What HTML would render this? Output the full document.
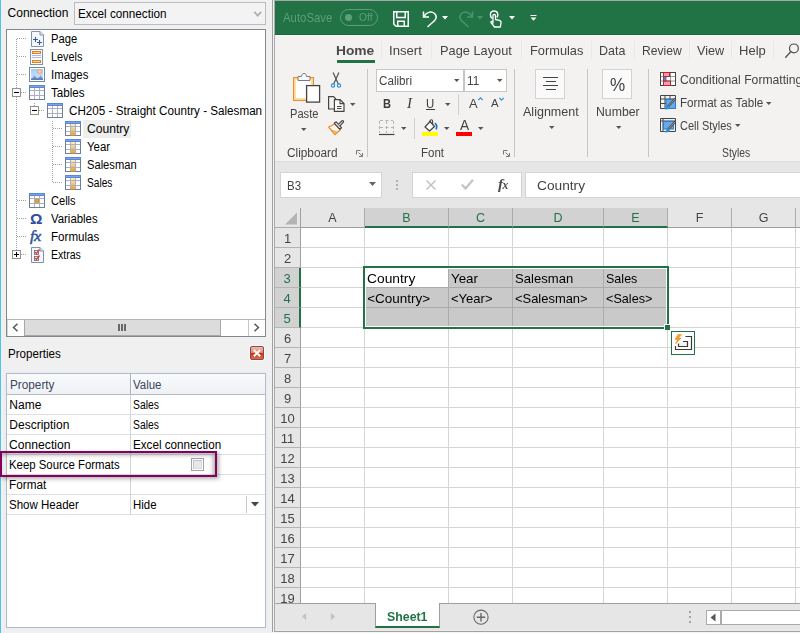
<!DOCTYPE html>
<html><head><meta charset="utf-8"><title>Properties</title>
<style>
*{box-sizing:border-box;margin:0;padding:0}
html,body{width:800px;height:633px;overflow:hidden;background:#f0f0f0}
body{font-family:"Liberation Sans",sans-serif;font-size:12px;color:#000;position:relative}
.a{position:absolute}
.t{position:absolute;white-space:pre;line-height:1}
svg{position:absolute;overflow:visible}
#left{left:0;top:0;width:272px;height:633px;background:#f0f0f0}
#tree{left:6px;top:29px;width:260px;height:308px;background:#fff;border:1px solid #828790}
.tr{position:absolute;white-space:pre;font-size:12px;line-height:18px;height:18px;letter-spacing:-0.1px;color:#000}
.dotv{position:absolute;width:1px;background-image:linear-gradient(#a0a0a0 50%,transparent 50%);background-size:1px 2px}
.doth{position:absolute;height:1px;background-image:linear-gradient(90deg,#a0a0a0 50%,transparent 50%);background-size:2px 1px}
.exp{position:absolute;width:9px;height:9px;border:1px solid #919191;background:#fff}
.exp i{position:absolute;left:1px;top:3px;width:5px;height:1px;background:#000}
.exp b{position:absolute;left:3px;top:1px;width:1px;height:5px;background:#000}
#pg{left:6px;top:373px;width:260px;height:255px;background:#fff;border:1px solid #b4bbc4;box-shadow:0 0 0 2px #eaeef3}
.pr{position:absolute;left:7px;width:258px;height:20px;border-bottom:1px solid #d9dde3}
.pl{position:absolute;font-size:12px;line-height:14px;white-space:pre;letter-spacing:-0.1px}
#xl{left:275px;top:0;width:525px;height:633px;background:#e6e6e6}
.rt{position:absolute;white-space:pre;font-size:13.5px;line-height:16px;color:#444}
.tab{position:absolute;white-space:pre;font-size:14px;line-height:16px;color:#444;top:42px}
.ch{position:absolute;top:208px;height:20px;background:#e6e6e6;border-right:1px solid #ababab;border-bottom:1px solid #9e9e9e;font-size:12.5px;line-height:21.5px;text-align:center;color:#444}
.ch.s{background:#d2d2d2;border-bottom:2px solid #217346;color:#217346}
.rh{position:absolute;left:275px;width:26px;height:20px;background:#e6e6e6;border-bottom:1px solid #b4b4b4;border-right:1px solid #a0a0a0;font-size:13px;line-height:21px;text-align:center;color:#444}
.rh.s{background:#d2d2d2;border-right:2px solid #217346;color:#217346}
.cell{position:absolute;font-size:14px;line-height:20px;white-space:pre;color:#000;letter-spacing:-0.2px}
.gv{position:absolute;width:1px;background:#d4d4d4;top:228px;height:375px}
.gh{position:absolute;height:1px;background:#d4d4d4;left:301px;width:499px}
</style></head><body>
<div class="a" id="left"></div>
<div class="a" style="left:0;top:0;width:1px;height:633px;background:#4dc3ea"></div>
<div class="t" style="left:7.6px;top:7px;font-size:12px;color:#000">Connection</div>
<div class="a" style="left:74px;top:2px;width:192px;height:23px;background:#f3f3f3;border:1px solid #b9bdc2"></div>
<div class="t" style="left:77.8px;top:8px;font-size:12px;transform:scaleX(0.9765);transform-origin:0 0;color:#000">Excel connection</div>
<svg style="left:254px;top:11px" width="8" height="6"><path d="M0.300 0.800L3.700 4.700L7.100 0.800" fill="none" stroke="#b0b0b0" stroke-width="1.800"/></svg>
<div class="a" id="tree"></div>
<svg width="0" height="0" style="left:0;top:0"><defs><linearGradient id="og" x1="0" y1="0" x2="0" y2="1"><stop offset="0" stop-color="#fdf0c0"/><stop offset="1" stop-color="#f0a020"/></linearGradient></defs></svg>
<div class="dotv" style="left:16px;top:39px;height:212px"></div>
<div class="doth" style="left:17px;top:38px;width:10px"></div>
<div class="doth" style="left:17px;top:56px;width:10px"></div>
<div class="doth" style="left:17px;top:74px;width:10px"></div>
<div class="doth" style="left:17px;top:92px;width:10px"></div>
<div class="doth" style="left:17px;top:200px;width:10px"></div>
<div class="doth" style="left:17px;top:218px;width:10px"></div>
<div class="doth" style="left:17px;top:236px;width:10px"></div>
<div class="doth" style="left:17px;top:254px;width:10px"></div>
<div class="doth" style="left:39px;top:110px;width:6px"></div>
<div class="dotv" style="left:34px;top:103px;height:3px"></div>
<div class="dotv" style="left:52px;top:121px;height:61px"></div>
<div class="doth" style="left:53px;top:128px;width:10px"></div>
<div class="doth" style="left:53px;top:146px;width:10px"></div>
<div class="doth" style="left:53px;top:164px;width:10px"></div>
<div class="doth" style="left:53px;top:182px;width:10px"></div>
<div class="exp" style="left:12px;top:88px"><i></i></div>
<div class="exp" style="left:30px;top:106px"><i></i></div>
<div class="exp" style="left:12px;top:250px"><i></i><b></b></div>
<div class="a" style="left:83px;top:120px;width:48px;height:18px;background:#eeeeee"></div>
<div class="t" style="left:51.2px;top:33px;font-size:12px;transform:scaleX(0.9311);transform-origin:0 0;color:#000">Page</div>
<div class="t" style="left:51.2px;top:51px;font-size:12px;transform:scaleX(0.9038);transform-origin:0 0;color:#000">Levels</div>
<div class="t" style="left:51.2px;top:69px;font-size:12px;transform:scaleX(0.9489);transform-origin:0 0;color:#000">Images</div>
<div class="t" style="left:51.2px;top:87px;font-size:12px;transform:scaleX(0.9686);transform-origin:0 0;color:#000">Tables</div>
<div class="t" style="left:69.2px;top:105px;font-size:12px;transform:scaleX(0.9716);transform-origin:0 0;color:#000">CH205 - Straight Country - Salesman</div>
<div class="t" style="left:87.2px;top:123px;font-size:12px;transform:scaleX(1.0088);transform-origin:0 0;color:#000">Country</div>
<div class="t" style="left:87.2px;top:141px;font-size:12px;transform:scaleX(0.9526);transform-origin:0 0;color:#000">Year</div>
<div class="t" style="left:87.2px;top:159px;font-size:12px;transform:scaleX(0.9293);transform-origin:0 0;color:#000">Salesman</div>
<div class="t" style="left:87.2px;top:177px;font-size:12px;transform:scaleX(0.8441);transform-origin:0 0;color:#000">Sales</div>
<div class="t" style="left:51.2px;top:195px;font-size:12px;transform:scaleX(0.9223);transform-origin:0 0;color:#000">Cells</div>
<div class="t" style="left:51.2px;top:213px;font-size:12px;transform:scaleX(0.9483);transform-origin:0 0;color:#000">Variables</div>
<div class="t" style="left:51.2px;top:231px;font-size:12px;transform:scaleX(0.9657);transform-origin:0 0;color:#000">Formulas</div>
<div class="t" style="left:51.2px;top:249px;font-size:12px;transform:scaleX(0.8775);transform-origin:0 0;color:#000">Extras</div>
<svg style="left:31px;top:31px" width="13" height="16" viewBox="0 0 13 16"><path d="M0.5 0.5H9L12.5 4V15.5H0.5Z" fill="#f4f7fc" stroke="#7f93b0"/><path d="M9 0.5V4H12.5" fill="#dfe8f5" stroke="#7f93b0"/><path d="M2 8.500H7M4.500 6V11M6 11.500H11M8.500 9V14" stroke="#3c58a8" stroke-width="1.100" fill="none"/></svg>
<svg style="left:30px;top:49px" width="13" height="16" viewBox="0 0 13 16"><rect x="0.5" y="0.5" width="12" height="15" fill="#f8fafd" stroke="#7f93b0"/><rect x="2" y="2" width="9" height="3" fill="#de7f1c"/><rect x="3" y="3" width="7" height="1" fill="#fbd9a8"/><rect x="2" y="11" width="9" height="3" fill="#de7f1c"/><rect x="3" y="12" width="7" height="1" fill="#fbd9a8"/><path d="M2 6.500H11M2 8.500H11" stroke="#a8bce0" stroke-width="1"/></svg>
<svg style="left:29px;top:67px" width="16" height="15" viewBox="0 0 16 15"><defs><linearGradient id="sk" x1="0" y1="0" x2="0" y2="1"><stop offset="0" stop-color="#9ccff8"/><stop offset="1" stop-color="#d4e9fb"/></linearGradient><linearGradient id="mt" x1="0" y1="0" x2="0" y2="1"><stop offset="0" stop-color="#93aedc"/><stop offset="1" stop-color="#5878b8"/></linearGradient></defs><rect x="0.5" y="0.5" width="15" height="14" fill="#fff" stroke="#7485a0"/><rect x="2" y="2" width="12" height="11" fill="url(#sk)"/><circle cx="10.500" cy="4.600" r="2.500" fill="#f7a383"/><circle cx="10.500" cy="4.600" r="1.300" fill="#fcd9c2"/><path d="M2 11.500L5 8L8 11L11.300 8.200L14 11.500V13H2Z" fill="url(#mt)"/><path d="M2.600 11.300L4.900 8.700M8.600 10.900L11 8.800" stroke="#fff" stroke-width="0.900" opacity="0.750" fill="none"/></svg>
<svg style="left:29px;top:85px" width="16" height="15" viewBox="0 0 16 15"><rect x="0.5" y="0.5" width="15" height="14" fill="#fff" stroke="#6f7f99"/><rect x="0" y="0" width="16" height="3" fill="#5b87d9"/><rect x="1" y="1" width="14" height="1" fill="#7ea3e6"/><path d="M1 5.500H15M1 10.500H15M5.500 3V14M10.500 3V14" stroke="#a9b2c2" stroke-width="1" fill="none"/></svg>
<svg style="left:47px;top:103px" width="16" height="15" viewBox="0 0 16 15"><rect x="0.5" y="0.5" width="15" height="14" fill="#fff" stroke="#6f7f99"/><rect x="0" y="0" width="16" height="3" fill="#5b87d9"/><rect x="1" y="1" width="14" height="1" fill="#7ea3e6"/><path d="M1 5.500H15M1 10.500H15M5.500 3V14M10.500 3V14" stroke="#a9b2c2" stroke-width="1" fill="none"/></svg>
<svg style="left:65px;top:121px" width="16" height="15" viewBox="0 0 16 15"><rect x="0.5" y="0.5" width="15" height="14" fill="#fff" stroke="#6f7f99"/><rect x="0" y="0" width="16" height="3" fill="#5b87d9"/><rect x="1" y="1" width="14" height="1" fill="#7ea3e6"/><rect x="5.500" y="3" width="5" height="11.500" fill="url(#og)"/><path d="M1 5.500H15M1 10.500H15M5.500 3V14M10.500 3V14" stroke="#a9b2c2" stroke-width="1" fill="none"/></svg>
<svg style="left:65px;top:139px" width="16" height="15" viewBox="0 0 16 15"><rect x="0.5" y="0.5" width="15" height="14" fill="#fff" stroke="#6f7f99"/><rect x="0" y="0" width="16" height="3" fill="#5b87d9"/><rect x="1" y="1" width="14" height="1" fill="#7ea3e6"/><rect x="5.500" y="3" width="5" height="11.500" fill="url(#og)"/><path d="M1 5.500H15M1 10.500H15M5.500 3V14M10.500 3V14" stroke="#a9b2c2" stroke-width="1" fill="none"/></svg>
<svg style="left:65px;top:157px" width="16" height="15" viewBox="0 0 16 15"><rect x="0.5" y="0.5" width="15" height="14" fill="#fff" stroke="#6f7f99"/><rect x="0" y="0" width="16" height="3" fill="#5b87d9"/><rect x="1" y="1" width="14" height="1" fill="#7ea3e6"/><rect x="5.500" y="3" width="5" height="11.500" fill="url(#og)"/><path d="M1 5.500H15M1 10.500H15M5.500 3V14M10.500 3V14" stroke="#a9b2c2" stroke-width="1" fill="none"/></svg>
<svg style="left:65px;top:175px" width="16" height="15" viewBox="0 0 16 15"><rect x="0.5" y="0.5" width="15" height="14" fill="#fff" stroke="#6f7f99"/><rect x="0" y="0" width="16" height="3" fill="#5b87d9"/><rect x="1" y="1" width="14" height="1" fill="#7ea3e6"/><rect x="5.500" y="3" width="5" height="11.500" fill="url(#og)"/><path d="M1 5.500H15M1 10.500H15M5.500 3V14M10.500 3V14" stroke="#a9b2c2" stroke-width="1" fill="none"/></svg>
<svg style="left:29px;top:193px" width="16" height="15" viewBox="0 0 16 15"><rect x="0.5" y="0.5" width="15" height="14" fill="#fff" stroke="#6f7f99"/><rect x="0" y="0" width="16" height="3" fill="#5b87d9"/><rect x="1" y="1" width="14" height="1" fill="#7ea3e6"/><rect x="6" y="6.500" width="4" height="4" fill="#f0a030" stroke="#c07818" stroke-width="0.6"/><path d="M1 5.500H15M1 10.500H15M5.500 3V14M10.500 3V14" stroke="#a9b2c2" stroke-width="1" fill="none"/></svg>
<div class="t" style="left:30.2px;top:210px;font-size:15px;font-weight:bold;color:#2d4f9e;line-height:18px;transform:scaleX(1.03);transform-origin:0 0">Ω</div>
<div class="t" style="left:29.5px;top:226.7px;font-size:14.5px;font-style:italic;color:#2d4f9e;line-height:18px;font-family:'Liberation Serif',serif;letter-spacing:-0.5px;-webkit-text-stroke:0.45px #2d4f9e;transform:scaleX(1.12);transform-origin:0 0">fx</div>
<svg style="left:31px;top:247px" width="13" height="16" viewBox="0 0 13 16"><path d="M0.5 0.5H9L12.5 4V15.5H0.5Z" fill="#f4f7fc" stroke="#7f93b0"/><path d="M9 0.5V4H12.5" fill="#dfe8f5" stroke="#7f93b0"/><rect x="3.500" y="3.500" width="4" height="4" fill="#fff" stroke="#66789a" stroke-width="0.900"/><rect x="3.500" y="9.500" width="4" height="4" fill="#fff" stroke="#66789a" stroke-width="0.900"/><path d="M4 5L5.500 6.500L8.500 2.500M4 11L5.500 12.500L8.500 8.500" stroke="#e8391a" stroke-width="1.300" fill="none"/></svg>
<div class="a" style="left:7px;top:319px;width:258px;height:17px;background:#fff;border-top:1px solid #b4b4b4"></div>
<div class="a" style="left:24px;top:320px;width:197px;height:16px;background:#dcdcdc;border-left:1px solid #a8a8a8;border-right:1px solid #a8a8a8"></div>
<div class="a" style="left:7px;top:320px;width:1px;height:16px;background:#d4d4d4"></div>
<div class="a" style="left:248px;top:320px;width:1px;height:16px;background:#c8c8c8"></div>
<svg style="left:12px;top:323px" width="7" height="9"><path d="M5.500 0.800L1.500 4.500L5.500 8.200" fill="none" stroke="#505050" stroke-width="1.400"/></svg>
<svg style="left:253px;top:323px" width="7" height="9"><path d="M1.500 0.800L5.500 4.500L1.500 8.200" fill="none" stroke="#505050" stroke-width="1.400"/></svg>
<div class="a" style="left:118px;top:324px;width:2px;height:7px;background:#686868"></div>
<div class="a" style="left:121px;top:324px;width:2px;height:7px;background:#686868"></div>
<div class="a" style="left:124px;top:324px;width:2px;height:7px;background:#686868"></div>
<div class="a" style="left:24px;top:335px;width:197px;height:1px;background:#a8a8a8"></div>
<div class="t" style="left:8px;top:348px;font-size:12px;transform:scaleX(0.9652);transform-origin:0 0;color:#000">Properties</div>
<svg style="left:249px;top:345px" width="16" height="16" viewBox="0 0 16 16"><defs><linearGradient id="cg" x1="0" y1="0" x2="0" y2="1"><stop offset="0" stop-color="#f8beb6"/><stop offset="0.5" stop-color="#e27c6c"/><stop offset="0.5" stop-color="#c62f16"/><stop offset="1" stop-color="#e0705c"/></linearGradient></defs><rect x="0.500" y="0.500" width="15" height="15" rx="2" fill="none" stroke="#f9fbfb"/><rect x="1.500" y="1.500" width="13" height="13" rx="1.500" fill="url(#cg)" stroke="#8a4a40"/><path d="M4.800 5L11.200 11.200M11.200 5L4.800 11.200" stroke="#fff" stroke-width="2"/></svg>
<div class="a" id="pg"></div>
<div class="a" style="left:7px;top:374px;width:258px;height:21px;background:linear-gradient(#f9fafc,#eff1f5);border-bottom:1px solid #b4bac2"></div>
<div class="a" style="left:130px;top:374px;width:1px;height:20px;background:#a8aeb6"></div>
<div class="a" style="left:131px;top:374px;width:1px;height:20px;background:#fdfdfe"></div>
<div class="a" style="left:7px;top:414px;width:258px;height:1px;background:#dcdfe4"></div>
<div class="a" style="left:7px;top:434px;width:258px;height:1px;background:#dcdfe4"></div>
<div class="a" style="left:7px;top:454px;width:258px;height:1px;background:#dcdfe4"></div>
<div class="a" style="left:7px;top:474px;width:258px;height:1px;background:#dcdfe4"></div>
<div class="a" style="left:7px;top:494px;width:258px;height:1px;background:#dcdfe4"></div>
<div class="a" style="left:7px;top:514px;width:258px;height:1px;background:#dcdfe4"></div>
<div class="a" style="left:130px;top:395px;width:1px;height:120px;background:#d0d5dc"></div>
<div class="t" style="left:10.3px;top:379px;font-size:12px;transform:scaleX(0.9811);transform-origin:0 0;color:#3a4660">Property</div>
<div class="t" style="left:133.3px;top:379px;font-size:12px;transform:scaleX(0.9560);transform-origin:0 0;color:#3a4660">Value</div>
<div class="t" style="left:9.3px;top:399px;font-size:12px;color:#000">Name</div>
<div class="t" style="left:133.3px;top:399px;font-size:12px;transform:scaleX(0.8624);transform-origin:0 0;color:#000">Sales</div>
<div class="t" style="left:9.3px;top:419px;font-size:12px;color:#000">Description</div>
<div class="t" style="left:133.3px;top:419px;font-size:12px;transform:scaleX(0.8624);transform-origin:0 0;color:#000">Sales</div>
<div class="t" style="left:9.3px;top:439px;font-size:12px;transform:scaleX(1.0129);transform-origin:0 0;color:#000">Connection</div>
<div class="t" style="left:133.3px;top:439px;font-size:12px;transform:scaleX(0.9721);transform-origin:0 0;color:#000">Excel connection</div>
<div class="t" style="left:9.3px;top:459px;font-size:12px;transform:scaleX(0.9484);transform-origin:0 0;color:#000">Keep Source Formats</div>
<div class="t" style="left:9.3px;top:479px;font-size:12px;transform:scaleX(0.9812);transform-origin:0 0;color:#000">Format</div>
<div class="t" style="left:9.3px;top:499px;font-size:12px;transform:scaleX(0.9599);transform-origin:0 0;color:#000">Show Header</div>
<div class="t" style="left:133.3px;top:499px;font-size:12px;transform:scaleX(0.9519);transform-origin:0 0;color:#000">Hide</div>
<div class="a" style="left:191px;top:458px;width:13px;height:13px;border:1px solid #9aa4b2;background:#fff"></div>
<div class="a" style="left:193px;top:460px;width:9px;height:9px;border:1px solid #c4c4c4;border-right-color:#dadada;border-bottom-color:#dadada;background:#e8e8e8"></div>
<div class="a" style="left:246px;top:496px;width:1px;height:17px;background:#c8c8c8"></div>
<svg style="left:251px;top:502px" width="8" height="5"><path d="M0 0H8L4 4.500Z" fill="#444"/></svg>
<div class="a" style="left:0px;top:451px;width:217px;height:26px;border:2px solid #84005c;box-shadow:2px 2px 4px rgba(0,0,0,0.3),inset -2px 2px 4px rgba(0,0,0,0.32)"></div>
<div class="a" style="left:272px;top:0;width:1px;height:633px;background:#a0a0a0"></div>
<div class="a" style="left:273px;top:0;width:1px;height:633px;background:#f0f0f0"></div>
<div class="a" style="left:274px;top:0;width:1px;height:633px;background:#ababab"></div>
<div id="xlc" style="position:absolute;left:0;top:0;width:800px;height:633px;will-change:transform">
<div class="a" id="xl"></div>
<div class="a" style="left:275px;top:0;width:525px;height:1px;background:#a8a8a8"></div>
<div class="a" style="left:275px;top:1px;width:525px;height:34px;background:#217346;border-bottom:1px solid #146a3a"></div>

<div class="t" style="left:283.4px;top:11px;font-size:13px;transform:scaleX(0.8745);transform-origin:0 0;color:#5f9d7c">AutoSave</div>
<div class="a" style="left:340px;top:9px;width:38px;height:17px;border:1px solid #5f9d7c;border-radius:9px"></div>
<div class="a" style="left:345px;top:14px;width:7px;height:7px;border-radius:4px;background:#5f9d7c"></div>
<div class="t" style="left:359px;top:12px;font-size:11.5px;transform:scaleX(0.8916);transform-origin:0 0;color:#5f9d7c">Off</div>
<!-- save -->
<svg style="left:393px;top:11px" width="16" height="16" viewBox="0 0 16 16"><path d="M0.750 0.750H15.250V15.250H3L0.750 13Z M3.750 0.750V6.500H12.250V0.750 M4.750 15.250V10.250H11.250V15.250" fill="none" stroke="#fff" stroke-width="1.500"/></svg>
<!-- undo -->
<svg style="left:422px;top:10px" width="16" height="18" viewBox="0 0 16 18"><path d="M1.500 1.500V7H7 M1.800 6.800C4 2.500 9 0.500 12.500 3.500C16 6.800 13.500 10 11 12L5.500 17" fill="none" stroke="#fff" stroke-width="1.500"/></svg>
<svg style="left:442px;top:16px" width="6" height="4"><path d="M0 0H6L3 3.500Z" fill="#fff"/></svg>
<!-- redo -->
<svg style="left:458px;top:10px" width="16" height="18" viewBox="0 0 16 18"><path d="M14.500 1.500V7H9 M14.200 6.800C12 2.500 7 0.500 3.500 3.500C0 6.800 2.500 10 5 12L10.500 17" fill="none" stroke="#4e9270" stroke-width="1.500"/></svg>
<svg style="left:477px;top:16px" width="6" height="4"><path d="M0 0H6L3 3.500Z" fill="#4e9270"/></svg>
<!-- touch -->
<svg style="left:489px;top:10px" width="14" height="18" viewBox="0 0 14 18"><path d="M3.200 8.500C0.500 6.500 0.500 1 5 1C9.500 1 9.500 6 7.800 7.500" fill="none" stroke="#fff" stroke-width="1.400"/><path d="M4 13V5.500C4 4 6.500 4 6.500 5.500V9.500L10.500 10.300C11.800 10.600 12.200 11.500 12 13L11.300 17H5.500L2 12.500C1.500 11.500 3 10.800 4 12Z" fill="#217346" stroke="#fff" stroke-width="1.300" stroke-linejoin="round"/></svg>
<svg style="left:509px;top:16px" width="6" height="4"><path d="M0 0H6L3 3.500Z" fill="#fff"/></svg>
<svg style="left:530px;top:14px" width="7" height="8"><path d="M0.500 1.500H6.500" stroke="#fff" stroke-width="1"/><path d="M0.500 3.500H6.500L3.500 6.800Z" fill="#fff"/></svg>
<!-- ribbon -->
<div class="a" style="left:275px;top:35px;width:525px;height:126px;background:#f3f2f1;border-top:1px solid #fdfbfb"></div>
<div class="a" style="left:275px;top:161px;width:525px;height:1px;background:#dadada"></div>
<div class="a" style="left:337px;top:60px;width:38px;height:3px;background:#217346"></div>
<div class="a" style="left:381px;top:41px;width:1px;height:18px;background:#eae8e6"></div>
<div class="a" style="left:431px;top:41px;width:1px;height:18px;background:#eae8e6"></div>
<div class="a" style="left:521px;top:41px;width:1px;height:18px;background:#eae8e6"></div>
<div class="a" style="left:591px;top:41px;width:1px;height:18px;background:#eae8e6"></div>
<div class="a" style="left:634px;top:41px;width:1px;height:18px;background:#eae8e6"></div>
<div class="a" style="left:689px;top:41px;width:1px;height:18px;background:#eae8e6"></div>
<div class="a" style="left:731px;top:41px;width:1px;height:18px;background:#eae8e6"></div>
<div class="a" style="left:773px;top:41px;width:1px;height:18px;background:#eae8e6"></div>
<div class="t" style="left:336.3px;top:45.4px;font-size:12.6px;transform:scaleX(1.0943);transform-origin:0 0;color:#444;font-weight:bold;color:#4a4a4a">Home</div>
<div class="t" style="left:389.3px;top:45.4px;font-size:12.6px;transform:scaleX(1.0413);transform-origin:0 0;color:#444;">Insert</div>
<div class="t" style="left:440.3px;top:45.4px;font-size:12.6px;transform:scaleX(1.0151);transform-origin:0 0;color:#444;">Page Layout</div>
<div class="t" style="left:529.7px;top:45.4px;font-size:12.6px;transform:scaleX(1.0174);transform-origin:0 0;color:#444;">Formulas</div>
<div class="t" style="left:598.9px;top:45.4px;font-size:12.6px;transform:scaleX(0.9921);transform-origin:0 0;color:#444;">Data</div>
<div class="t" style="left:641.8px;top:45.4px;font-size:12.6px;transform:scaleX(0.9638);transform-origin:0 0;color:#444;">Review</div>
<div class="t" style="left:696.7px;top:45.4px;font-size:12.6px;transform:scaleX(1.0045);transform-origin:0 0;color:#444;">View</div>
<div class="t" style="left:738.9px;top:45.4px;font-size:12.6px;transform:scaleX(1.0345);transform-origin:0 0;color:#444;">Help</div>
<svg style="left:784px;top:41px" width="17" height="18" viewBox="0 0 17 18"><circle cx="9.900" cy="7.400" r="4.400" fill="none" stroke="#505050" stroke-width="1.200"/><path d="M6.700 10.800L1.300 16.700" stroke="#505050" stroke-width="1.300"/></svg>
<!-- clipboard group -->
<svg style="left:293px;top:72px" width="28" height="31" viewBox="0 0 28 31"><rect x="0.5" y="5.500" width="20" height="23" fill="#fff" stroke="#ed8b2f"/><rect x="1.900" y="6.900" width="17.200" height="20.200" fill="none" stroke="#fbd98f" stroke-width="1.800"/><path d="M5 8.500V4.500H8.500C8.500 0.500 13.500 0.500 13.500 4.500H17V8.500Z" fill="#f7f7f7" stroke="#7a7a7a"/><rect x="13.600" y="13.600" width="13" height="16.500" fill="#fff" stroke="#444" stroke-width="1.300"/></svg>
<div class="t" style="left:289.8px;top:107.6px;font-size:12px;transform:scaleX(0.9255);transform-origin:0 0;color:#444">Paste</div>
<svg style="left:301px;top:128px" width="6" height="4"><path d="M0 0H5.500L2.750 3Z" fill="#555"/></svg>
<!-- scissors -->
<svg style="left:330px;top:72px" width="12" height="16" viewBox="0 0 12 16"><path d="M3.100 0.600L8.400 12.300M8.900 0.600L3.600 12.300" stroke="#505050" stroke-width="1.200" fill="none"/><circle cx="3" cy="13.500" r="1.600" fill="#fff" stroke="#2b8edb" stroke-width="1.200"/><circle cx="9" cy="13.500" r="1.600" fill="#fff" stroke="#2b8edb" stroke-width="1.200"/></svg>
<!-- copy -->
<svg style="left:328px;top:96px" width="17" height="16" viewBox="0 0 17 16"><path d="M6.200 13H0.600V0.600H5.500L7.500 2.600V3.600" fill="none" stroke="#444" stroke-width="1.200"/><path d="M6.400 3.600H12L16 7.600V15.400H6.400Z" fill="#fafafa" stroke="#444" stroke-width="1.200"/><path d="M12 3.600V7.600H16" fill="none" stroke="#444" stroke-width="1.100"/><path d="M9 10.500H13.500M9 12.500H13.500" stroke="#444" stroke-width="1"/></svg>
<svg style="left:350px;top:103px" width="6" height="4"><path d="M0 0H5.500L2.750 3Z" fill="#555"/></svg>
<!-- format painter -->
<svg style="left:328px;top:119px" width="17" height="16" viewBox="0 0 17 16"><path d="M0.600 8L7 5L12.400 10.800L7 15.500Z" fill="#fdf6ee" stroke="#ed8b2f" stroke-width="1.200" stroke-linejoin="round"/><path d="M3.300 11.300L9.800 13.200L7 15.500Z" fill="#fbc462" stroke="#ed8b2f" stroke-width="0.800" stroke-linejoin="round"/><path d="M6.200 4.200L8.200 2.800L13.600 8.800L11.600 10.200Z" fill="#f3f2f1" stroke="#444" stroke-width="1.200" stroke-linejoin="round"/><path d="M10.600 5.200L13.800 2C14.800 1 16.200 2.400 15.200 3.400L12 6.800" fill="#f3f2f1" stroke="#444" stroke-width="1.200"/></svg>
<div class="t" style="left:287px;top:146.5px;font-size:12px;transform:scaleX(0.9849);transform-origin:0 0;color:#444">Clipboard</div>
<svg style="left:356px;top:150px" width="7" height="7" viewBox="0 0 7 7"><path d="M0.500 4.500V0.500H4.500" fill="none" stroke="#777" stroke-width="1"/><path d="M2.500 2.500L6 6M6.500 3V6.500H3" fill="none" stroke="#777" stroke-width="1"/></svg>
<div class="a" style="left:367px;top:69px;width:1px;height:88px;background:#c8c6c4"></div>
<!-- font group -->
<div class="a" style="left:376px;top:69px;width:88px;height:23px;background:#fff;border:1px solid #c6c6c6"></div>
<div class="a" style="left:464px;top:69px;width:43px;height:23px;background:#fff;border:1px solid #c6c6c6"></div>
<div class="t" style="left:379.4px;top:74.8px;font-size:12px;transform:scaleX(0.9701);transform-origin:0 0;color:#444">Calibri</div>
<div class="t" style="left:466.600px;top:74.5px;font-size:12px;transform:scaleX(0.9784);transform-origin:0 0;color:#444">11</div>
<svg style="left:454px;top:79px" width="6" height="4"><path d="M0 0H5.500L2.750 3Z" fill="#555"/></svg>
<svg style="left:497px;top:79px" width="6" height="4"><path d="M0 0H5.500L2.750 3Z" fill="#555"/></svg>
<div class="t" style="left:382.600px;top:97px;font-size:13px;transform:scaleX(0.8519);transform-origin:0 0;color:#3b3b3b;font-weight:bold">B</div>
<div class="t" style="left:406.5px;top:97px;font-size:13px;transform:scaleX(1.0702);transform-origin:0 0;color:#3b3b3b;font-style:italic;font-family:'Liberation Serif',serif;font-size:14px">I</div>
<div class="t" style="left:425.900px;top:97px;font-size:13px;transform:scaleX(0.8732);transform-origin:0 0;color:#3b3b3b">U</div>
<div class="a" style="left:426px;top:109px;width:9px;height:1px;background:#3b3b3b"></div>
<svg style="left:445px;top:103px" width="6" height="4"><path d="M0 0H5.500L2.750 3Z" fill="#555"/></svg>
<div class="a" style="left:458px;top:94px;width:1px;height:21px;background:#d2d0ce"></div>
<div class="t" style="left:469.4px;top:96.600px;font-size:13px;transform:scaleX(0.9917);transform-origin:0 0;color:#444">A</div>
<svg style="left:478px;top:97px" width="5" height="4"><path d="M0.300 3.200L2.500 0.800L4.700 3.200" fill="none" stroke="#2b8edb" stroke-width="1.200"/></svg>
<div class="t" style="left:491px;top:98.300px;font-size:11px;transform:scaleX(1.0349);transform-origin:0 0;color:#444">A</div>
<svg style="left:499px;top:97px" width="5" height="4"><path d="M0.300 0.800L2.500 3.200L4.700 0.800" fill="none" stroke="#2b8edb" stroke-width="1.200"/></svg>
<!-- borders -->
<svg style="left:379px;top:120px" width="16" height="15" viewBox="0 0 16 15"><path d="M1 0.500H14M1 7.500H14" fill="none" stroke="#b4b4b4" stroke-width="1" stroke-dasharray="3 2.500"/><path d="M0.500 1V13M7.500 1V13M14.500 1V13" fill="none" stroke="#b4b4b4" stroke-width="1" stroke-dasharray="3 2"/><path d="M0 14.500H15.500" stroke="#444" stroke-width="1.200"/></svg>
<svg style="left:401px;top:127px" width="6" height="4"><path d="M0 0H5.500L2.750 3Z" fill="#555"/></svg>
<div class="a" style="left:414px;top:118px;width:1px;height:21px;background:#d2d0ce"></div>
<!-- fill -->
<svg style="left:422px;top:119px" width="17" height="17" viewBox="0 0 17 17"><rect x="0" y="13" width="16" height="4" fill="#ffff00"/><path d="M3 8L8 2.500L12.500 7.500L7.500 12Z" fill="#fff" stroke="#444" stroke-width="1.200" stroke-linejoin="round"/><path d="M8 4V2C8 0.300 10.600 0.300 10.600 2V5.500" fill="none" stroke="#444" stroke-width="1.100"/><path d="M12.800 4.300C14.600 5.300 15 8 14.200 10.500" fill="none" stroke="#1e70c0" stroke-width="1.700"/></svg>
<svg style="left:444px;top:127px" width="6" height="4"><path d="M0 0H5.500L2.750 3Z" fill="#555"/></svg>
<!-- font color -->
<div class="t" style="left:459.800px;top:118.200px;font-size:14.500px;transform:scaleX(0.9512);transform-origin:0 0;color:#444">A</div>
<div class="a" style="left:456px;top:132px;width:16px;height:4px;background:#ff0000"></div>
<svg style="left:478px;top:127px" width="6" height="4"><path d="M0 0H5.500L2.750 3Z" fill="#555"/></svg>
<div class="t" style="left:421px;top:146.5px;font-size:12px;transform:scaleX(0.9577);transform-origin:0 0;color:#444">Font</div>
<svg style="left:503px;top:150px" width="7" height="7" viewBox="0 0 7 7"><path d="M0.500 4.500V0.500H4.500" fill="none" stroke="#777" stroke-width="1"/><path d="M2.500 2.500L6 6M6.500 3V6.500H3" fill="none" stroke="#777" stroke-width="1"/></svg>
<div class="a" style="left:514px;top:69px;width:1px;height:88px;background:#c8c6c4"></div>
<!-- alignment -->
<div class="a" style="left:535px;top:69px;width:30px;height:30px;background:#fafafa;border:1px solid #d2d2d2"></div>
<div class="a" style="left:543px;top:77px;width:15px;height:1px;background:#444"></div>
<div class="a" style="left:546px;top:81px;width:10px;height:1px;background:#444"></div>
<div class="a" style="left:543px;top:85px;width:15px;height:1px;background:#444"></div>
<div class="a" style="left:546px;top:89px;width:10px;height:1px;background:#444"></div>
<div class="t" style="left:523.2px;top:105.8px;font-size:12px;transform:scaleX(1.0436);transform-origin:0 0;color:#444">Alignment</div>
<svg style="left:549px;top:126px" width="6" height="4"><path d="M0 0H5.500L2.750 3Z" fill="#555"/></svg>
<div class="a" style="left:587px;top:69px;width:1px;height:88px;background:#c8c6c4"></div>
<!-- number -->
<div class="a" style="left:602px;top:69px;width:30px;height:30px;background:#fafafa;border:1px solid #d2d2d2"></div>
<div class="t" style="left:610.4px;top:74.600px;font-size:19px;transform:scaleX(0.8991);transform-origin:0 0;color:#444">%</div>
<div class="t" style="left:596.4px;top:105.8px;font-size:12px;transform:scaleX(1.0237);transform-origin:0 0;color:#444">Number</div>
<svg style="left:616px;top:126px" width="6" height="4"><path d="M0 0H5.500L2.750 3Z" fill="#555"/></svg>
<div class="a" style="left:648px;top:69px;width:1px;height:88px;background:#c8c6c4"></div>
<!-- styles -->
<svg style="left:660px;top:72px" width="16" height="14" viewBox="0 0 16 14"><rect x="0.500" y="0.500" width="15" height="13" fill="#fff" stroke="#444"/><rect x="3.500" y="0.500" width="6" height="4" fill="#f8a0a8" stroke="#e81123" stroke-width="1"/><rect x="3.500" y="9" width="7" height="4.500" fill="#f8a0a8" stroke="#e81123" stroke-width="1"/><rect x="3.500" y="4.500" width="2.500" height="4.500" fill="#4a90d9" stroke="#e81123" stroke-width="0.8"/><path d="M0.500 4.500H15.500M0.500 9H15.500M3.500 0.500V13.500M10.500 0.500V13.500" stroke="#555" stroke-width="0.6" fill="none"/></svg>
<div class="t" style="left:679.750px;top:73.8px;font-size:12px;transform:scaleX(1.0130);transform-origin:0 0;color:#444">Conditional Formatting</div>
<svg style="left:660px;top:95px" width="17" height="15" viewBox="0 0 17 15"><path d="M0.500 0.500H15.500V13.500H0.500ZM0.500 4H15.500M0.500 8.500H6M5 0.500V13.500M10 0.500V4" fill="none" stroke="#444" stroke-width="1"/><rect x="6" y="4.500" width="9.500" height="9" fill="#69a9e8" stroke="#2b7cd3" stroke-width="1"/><path d="M15.500 3.500L8 11.500" stroke="#444" stroke-width="2.200"/><path d="M15.200 3.800L8.300 11.200" stroke="#bbb" stroke-width="0.800"/><path d="M8.500 10.500C6.500 10.500 6.500 13 4 13.800C6 15 9.500 14.500 9.800 11.800Z" fill="#2b8edb"/></svg>
<div class="t" style="left:679.750px;top:96.7px;font-size:12px;transform:scaleX(0.9694);transform-origin:0 0;color:#444">Format as Table</div>
<svg style="left:766px;top:101.500px" width="6" height="4"><path d="M0 0H5.500L2.750 3Z" fill="#555"/></svg>
<svg style="left:660px;top:118px" width="17" height="15" viewBox="0 0 17 15"><path d="M0.500 0.500H15.500V13.500H0.500ZM0.500 3H15.500M3 0.500V13.500" fill="none" stroke="#444" stroke-width="1"/><rect x="3.500" y="3.500" width="10" height="7.500" fill="#69a9e8" stroke="#2b7cd3" stroke-width="1"/><path d="M15.500 3.500L8 11.500" stroke="#444" stroke-width="2.200"/><path d="M15.200 3.800L8.300 11.200" stroke="#bbb" stroke-width="0.800"/><path d="M8.500 10.500C6.500 10.500 6.500 13 4 13.800C6 15 9.500 14.500 9.800 11.800Z" fill="#2b8edb"/></svg>
<div class="t" style="left:679.750px;top:119.6px;font-size:12px;transform:scaleX(0.9129);transform-origin:0 0;color:#444">Cell Styles</div>
<svg style="left:735px;top:124px" width="6" height="4"><path d="M0 0H5.500L2.750 3Z" fill="#555"/></svg>
<div class="t" style="left:722.4px;top:146.5px;font-size:12px;transform:scaleX(0.8627);transform-origin:0 0;color:#444">Styles</div>
<div class="a" style="left:280px;top:172px;width:102px;height:26px;background:#fff;border:1px solid #d4d4d4"></div>
<div class="t" style="left:287px;top:179.500px;font-size:12px;transform:scaleX(0.9532);transform-origin:0 0;color:#444">B3</div>
<svg style="left:369px;top:182px" width="8" height="5"><path d="M0 0H7L3.500 4Z" fill="#666"/></svg>
<div class="a" style="left:396px;top:180px;width:2px;height:2px;background:#b0b0b0"></div>
<div class="a" style="left:396px;top:184px;width:2px;height:2px;background:#b0b0b0"></div>
<div class="a" style="left:396px;top:188px;width:2px;height:2px;background:#b0b0b0"></div>
<div class="a" style="left:412px;top:172px;width:110px;height:26px;background:#fff;border:1px solid #d4d4d4"></div>
<svg style="left:426px;top:180px" width="10" height="10"><path d="M0.500 0.500L9.500 9.500M9.500 0.500L0.500 9.500" stroke="#c2c2c2" stroke-width="1.500"/></svg>
<svg style="left:461px;top:179px" width="13" height="11"><path d="M0.800 5.500L4.500 9.500L12 0.800" stroke="#c4c4c4" stroke-width="2.300" fill="none"/></svg>
<div class="t" style="left:498px;top:176px;font-size:15.5px;font-style:italic;font-weight:bold;color:#4a4a4a;font-family:'Liberation Serif',serif;letter-spacing:-0.8px">f<span style="font-size:11.5px">x</span></div>
<div class="a" style="left:525px;top:172px;width:281px;height:26px;background:#fff;border:1px solid #d4d4d4"></div>
<div class="t" style="left:536.5px;top:179.500px;font-size:12px;transform:scaleX(1.1420);transform-origin:0 0;color:#444">Country</div>
<div class="a" style="left:275px;top:208px;width:525px;height:395px;background:#fff"></div>
<div class="a" style="left:275px;top:208px;width:26px;height:20px;background:#e6e6e6;border-right:1px solid #a0a0a0;border-bottom:1px solid #ababab"></div>
<svg style="left:284px;top:212px" width="14" height="13"><path d="M13 0.500V12.500H1Z" fill="#b4b4b4"/></svg>
<div class="ch" style="left:301px;width:64px">A</div>
<div class="ch s" style="left:365px;width:84px">B</div>
<div class="ch s" style="left:449px;width:64px">C</div>
<div class="ch s" style="left:513px;width:91px">D</div>
<div class="ch s" style="left:604px;width:64px">E</div>
<div class="ch" style="left:668px;width:64px">F</div>
<div class="ch" style="left:732px;width:64px">G</div>
<div class="ch" style="left:796px;width:10px"></div>
<div class="a" style="left:365px;top:268px;width:302px;height:59px;background:#c9c9c9"></div>
<div class="a" style="left:365px;top:268px;width:83px;height:19px;background:#fff"></div>
<div class="gv" style="left:364px"></div>
<div class="gv" style="left:448px"></div>
<div class="gv" style="left:512px"></div>
<div class="gv" style="left:603px"></div>
<div class="gv" style="left:667px"></div>
<div class="gv" style="left:731px"></div>
<div class="gv" style="left:795px"></div>
<div class="rh" style="top:228px;height:20px">1</div>
<div class="gh" style="top:247px"></div>
<div class="rh" style="top:248px;height:20px">2</div>
<div class="gh" style="top:267px"></div>
<div class="rh s" style="top:268px;height:20px">3</div>
<div class="gh" style="top:287px"></div>
<div class="rh s" style="top:288px;height:20px">4</div>
<div class="gh" style="top:307px"></div>
<div class="rh s" style="top:308px;height:20px">5</div>
<div class="gh" style="top:327px"></div>
<div class="rh" style="top:328px;height:20px">6</div>
<div class="gh" style="top:347px"></div>
<div class="rh" style="top:348px;height:20px">7</div>
<div class="gh" style="top:367px"></div>
<div class="rh" style="top:368px;height:20px">8</div>
<div class="gh" style="top:387px"></div>
<div class="rh" style="top:388px;height:20px">9</div>
<div class="gh" style="top:407px"></div>
<div class="rh" style="top:408px;height:20px">10</div>
<div class="gh" style="top:427px"></div>
<div class="rh" style="top:428px;height:20px">11</div>
<div class="gh" style="top:447px"></div>
<div class="rh" style="top:448px;height:20px">12</div>
<div class="gh" style="top:467px"></div>
<div class="rh" style="top:468px;height:20px">13</div>
<div class="gh" style="top:487px"></div>
<div class="rh" style="top:488px;height:20px">14</div>
<div class="gh" style="top:507px"></div>
<div class="rh" style="top:508px;height:20px">15</div>
<div class="gh" style="top:527px"></div>
<div class="rh" style="top:528px;height:20px">16</div>
<div class="gh" style="top:547px"></div>
<div class="rh" style="top:548px;height:20px">17</div>
<div class="gh" style="top:567px"></div>
<div class="rh" style="top:568px;height:20px">18</div>
<div class="gh" style="top:587px"></div>
<div class="rh" style="top:588px;height:16px">19</div>
<div class="a" style="left:448px;top:268px;width:1px;height:59px;background:#ababab"></div>
<div class="a" style="left:512px;top:268px;width:1px;height:59px;background:#ababab"></div>
<div class="a" style="left:603px;top:268px;width:1px;height:59px;background:#ababab"></div>
<div class="a" style="left:365px;top:287px;width:302px;height:1px;background:#ababab"></div>
<div class="a" style="left:365px;top:307px;width:302px;height:1px;background:#ababab"></div>
<div class="a" style="left:363px;top:266px;width:306px;height:63px;border:2px solid #217346"></div>
<div class="a" style="left:365px;top:268px;width:302px;height:59px;border:1px solid #fff"></div>
<div class="a" style="left:664px;top:324px;width:6px;height:6px;background:#217346;border-left:1px solid #fff;border-top:1px solid #fff"></div>
<div class="t" style="left:367.2px;top:271.6px;font-size:13.5px;transform:scaleX(1.0215);transform-origin:0 0;color:#000">Country</div>
<div class="t" style="left:450.7px;top:271.6px;font-size:13.5px;transform:scaleX(0.9897);transform-origin:0 0;color:#000">Year</div>
<div class="t" style="left:515.2px;top:271.6px;font-size:13.5px;transform:scaleX(0.9692);transform-origin:0 0;color:#000">Salesman</div>
<div class="t" style="left:605.9px;top:271.6px;font-size:13.5px;transform:scaleX(0.9295);transform-origin:0 0;color:#000">Sales</div>
<div class="t" style="left:367.2px;top:291.6px;font-size:13.5px;color:#000">&lt;Country&gt;</div>
<div class="t" style="left:450.7px;top:291.6px;font-size:13.5px;transform:scaleX(0.9641);transform-origin:0 0;color:#000">&lt;Year&gt;</div>
<div class="t" style="left:515.2px;top:291.6px;font-size:13.5px;transform:scaleX(0.9576);transform-origin:0 0;color:#000">&lt;Salesman&gt;</div>
<div class="t" style="left:605.9px;top:291.6px;font-size:13.5px;transform:scaleX(0.9365);transform-origin:0 0;color:#000">&lt;Sales&gt;</div>
<svg style="left:671px;top:331px" width="24" height="24" viewBox="0 0 24 24"><rect x="0.500" y="0.500" width="23" height="23" fill="#fff" stroke="#217346"/><path d="M14.500 5.500H20.500V18.500H4.500V15" fill="none" stroke="#3a3a3a" stroke-width="1.200"/><path d="M12 10.500H16.500V15.500H7.500V12.500" fill="#f4f4f4" stroke="#3a3a3a" stroke-width="1.200"/><path d="M7 3.500L4 8.500H6.500L4.500 13L10 7H7.500L10.500 3.500Z" fill="#f59a23" stroke="#e8830c" stroke-width="0.500"/></svg>
<div class="a" style="left:276px;top:603px;width:524px;height:1px;background:#9f9f9f"></div>
<div class="a" style="left:276px;top:604px;width:524px;height:26px;background:#e6e6e6"></div>
<div class="a" style="left:275px;top:630px;width:525px;height:1px;background:#ececec"></div>
<div class="a" style="left:274px;top:631px;width:526px;height:1px;background:#a2a2a2"></div>
<div class="a" style="left:272px;top:632px;width:528px;height:1px;background:#f4f4f4"></div>
<div class="a" style="left:375px;top:603px;width:65px;height:25px;background:#fff;border-left:1px solid #9f9f9f;border-right:1px solid #9f9f9f;border-bottom:2px solid #217346"></div>
<div class="t" style="left:387px;top:609.5px;font-size:13.5px;transform:scaleX(0.9146);transform-origin:0 0;color:#217346;font-weight:bold">Sheet1</div>
<svg style="left:301px;top:613px" width="6" height="8"><path d="M5.100 0V7.200L0.900 3.600Z" fill="#c2c2c2"/></svg>
<svg style="left:330px;top:613px" width="6" height="8"><path d="M0.900 0V7.200L5.100 3.600Z" fill="#c2c2c2"/></svg>
<svg style="left:472px;top:608px" width="18" height="18" viewBox="0 0 18 18"><circle cx="9" cy="9.200" r="7.100" fill="none" stroke="#666" stroke-width="1.100"/><path d="M9 5V13.400M4.800 9.200H13.200" stroke="#666" stroke-width="1.400"/></svg>
<div class="a" style="left:689px;top:611px;width:2px;height:2px;background:#a0a0a0"></div>
<div class="a" style="left:689px;top:616px;width:2px;height:2px;background:#a0a0a0"></div>
<div class="a" style="left:689px;top:621px;width:2px;height:2px;background:#a0a0a0"></div>
<div class="a" style="left:706px;top:610px;width:15px;height:15px;background:#fff;border:1px solid #ababab"></div>
<svg style="left:710px;top:613px" width="6" height="9"><path d="M5.500 0.500V8.500L0.500 4.500Z" fill="#555"/></svg>
<div class="a" style="left:721px;top:610px;width:85px;height:15px;background:#fff;border:1px solid #ababab"></div>
</div>
</body></html>
